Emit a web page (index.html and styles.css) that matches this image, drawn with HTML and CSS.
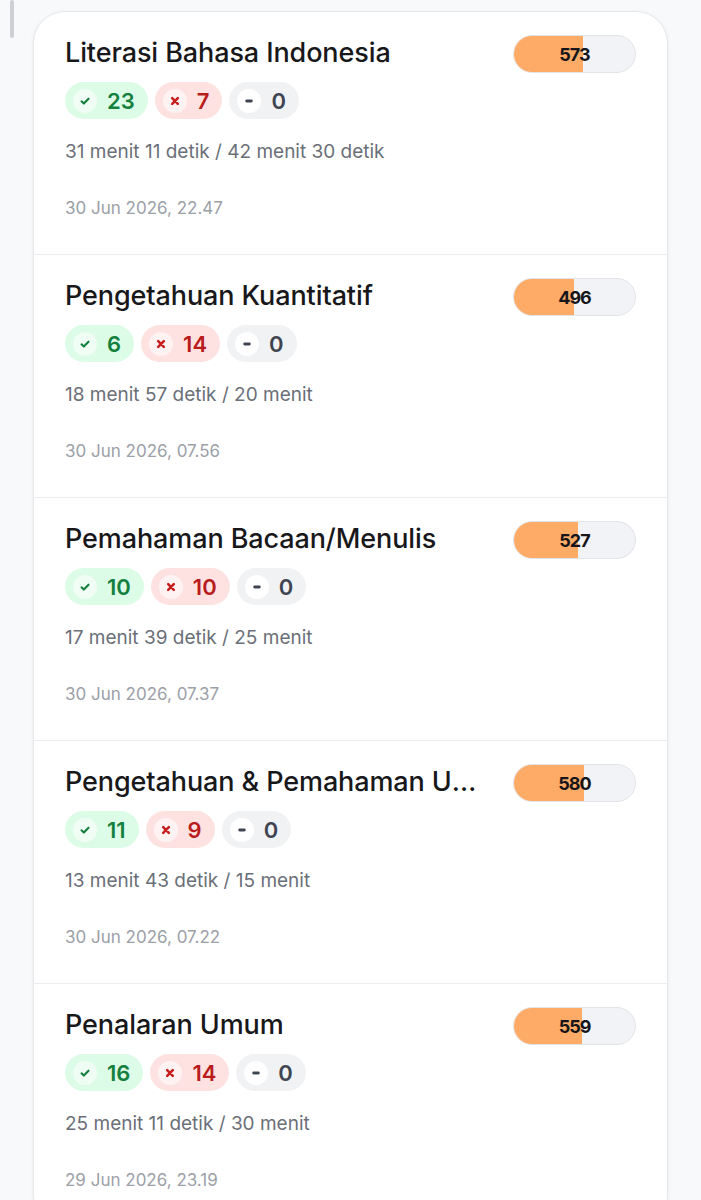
FILE: index.html
```html
<!DOCTYPE html>
<html lang="id">
<head>
    <meta charset="UTF-8">
    <meta name="viewport" content="width=device-width, initial-scale=1.0">
    <title>Riwayat Tryout</title>
    <link rel="stylesheet" href="styles.css">
</head>
<body>
    <div class="scroll-thumb"></div>

    <div class="card">
        <div class="row">
            <div class="info">
                <div class="title">Literasi Bahasa Indonesia</div>
                <div class="badges">
                    <span class="badge ok"><span class="dot"><svg viewBox="0 0 12 12"><path d="M3 6.3l2 1.9 4-4.2"/></svg></span>23</span>
                    <span class="badge bad"><span class="dot"><svg viewBox="0 0 12 12"><path d="M3.6 3.6l4.8 4.8M8.4 3.6l-4.8 4.8"/></svg></span>7</span>
                    <span class="badge none"><span class="dot"><svg viewBox="0 0 12 12"><path d="M4 6h4"/></svg></span>0</span>
                </div>
                <div class="time">31 menit 11 detik / 42 menit 30 detik</div>
                <div class="date">30 Jun 2026, 22.47</div>
            </div>
            <div class="score"><div class="fill" style="width: 57.3%"></div><span>573</span></div>
        </div>

        <div class="row">
            <div class="info">
                <div class="title">Pengetahuan Kuantitatif</div>
                <div class="badges">
                    <span class="badge ok"><span class="dot"><svg viewBox="0 0 12 12"><path d="M3 6.3l2 1.9 4-4.2"/></svg></span>6</span>
                    <span class="badge bad"><span class="dot"><svg viewBox="0 0 12 12"><path d="M3.6 3.6l4.8 4.8M8.4 3.6l-4.8 4.8"/></svg></span>14</span>
                    <span class="badge none"><span class="dot"><svg viewBox="0 0 12 12"><path d="M4 6h4"/></svg></span>0</span>
                </div>
                <div class="time">18 menit 57 detik / 20 menit</div>
                <div class="date">30 Jun 2026, 07.56</div>
            </div>
            <div class="score"><div class="fill" style="width: 49.6%"></div><span>496</span></div>
        </div>

        <div class="row">
            <div class="info">
                <div class="title">Pemahaman Bacaan/Menulis</div>
                <div class="badges">
                    <span class="badge ok"><span class="dot"><svg viewBox="0 0 12 12"><path d="M3 6.3l2 1.9 4-4.2"/></svg></span>10</span>
                    <span class="badge bad"><span class="dot"><svg viewBox="0 0 12 12"><path d="M3.6 3.6l4.8 4.8M8.4 3.6l-4.8 4.8"/></svg></span>10</span>
                    <span class="badge none"><span class="dot"><svg viewBox="0 0 12 12"><path d="M4 6h4"/></svg></span>0</span>
                </div>
                <div class="time">17 menit 39 detik / 25 menit</div>
                <div class="date">30 Jun 2026, 07.37</div>
            </div>
            <div class="score"><div class="fill" style="width: 52.7%"></div><span>527</span></div>
        </div>

        <div class="row">
            <div class="info">
                <div class="title">Pengetahuan &amp; Pemahaman Umum</div>
                <div class="badges">
                    <span class="badge ok"><span class="dot"><svg viewBox="0 0 12 12"><path d="M3 6.3l2 1.9 4-4.2"/></svg></span>11</span>
                    <span class="badge bad"><span class="dot"><svg viewBox="0 0 12 12"><path d="M3.6 3.6l4.8 4.8M8.4 3.6l-4.8 4.8"/></svg></span>9</span>
                    <span class="badge none"><span class="dot"><svg viewBox="0 0 12 12"><path d="M4 6h4"/></svg></span>0</span>
                </div>
                <div class="time">13 menit 43 detik / 15 menit</div>
                <div class="date">30 Jun 2026, 07.22</div>
            </div>
            <div class="score"><div class="fill" style="width: 58%"></div><span>580</span></div>
        </div>

        <div class="row">
            <div class="info">
                <div class="title">Penalaran Umum</div>
                <div class="badges">
                    <span class="badge ok"><span class="dot"><svg viewBox="0 0 12 12"><path d="M3 6.3l2 1.9 4-4.2"/></svg></span>16</span>
                    <span class="badge bad"><span class="dot"><svg viewBox="0 0 12 12"><path d="M3.6 3.6l4.8 4.8M8.4 3.6l-4.8 4.8"/></svg></span>14</span>
                    <span class="badge none"><span class="dot"><svg viewBox="0 0 12 12"><path d="M4 6h4"/></svg></span>0</span>
                </div>
                <div class="time">25 menit 11 detik / 30 menit</div>
                <div class="date">29 Jun 2026, 23.19</div>
            </div>
            <div class="score"><div class="fill" style="width: 55.9%"></div><span>559</span></div>
        </div>
    </div>
</body>
</html>
```

FILE: styles.css
```css
body {
    margin: 0;
    background: #f8f9fb;
    font-family: "Inter", "Noto Sans", sans-serif;
    color: #18181b;
}
.scroll-thumb {
    position: fixed;
    left: 10px;
    top: 0;
    width: 4px;
    height: 38px;
    border-radius: 2px;
    background: #cfd0d4;
}
.card {
    margin: 11px 0 0 33px;
    width: 635px;
    box-sizing: border-box;
    background: #fff;
    border: 1px solid #e6e7ea;
    border-radius: 32px;
    box-shadow: 0 1px 4px rgba(0, 0, 0, 0.06);
    overflow: hidden;
}
.row {
    display: flex;
    align-items: flex-start;
    gap: 34px;
    padding: 23px 31px 34px 31px;
    border-bottom: 1px solid #ececef;
}
.info {
    flex: 1;
    min-width: 0;
}
.title {
    font-size: 27px;
    line-height: 36px;
    font-weight: 500;
    letter-spacing: -0.1px;
    white-space: nowrap;
    overflow: hidden;
    text-overflow: ellipsis;
}
.badges {
    display: flex;
    gap: 7px;
    margin-top: 11px;
}
.badge {
    display: inline-flex;
    align-items: center;
    gap: 10px;
    height: 37px;
    padding: 0 13px 0 8px;
    border-radius: 19px;
    font-size: 22px;
    font-weight: 600;
}
.dot {
    width: 24px;
    height: 24px;
    border-radius: 50%;
    display: flex;
    align-items: center;
    justify-content: center;
}
.dot svg {
    width: 14px;
    height: 14px;
    fill: none;
    stroke-width: 1.8;
    stroke-linecap: round;
    stroke-linejoin: round;
}
.ok { background: #dcfce7; color: #15803d; }
.ok .dot { background: #f0fdf4; }
.ok svg { stroke: #15803d; }
.bad { background: #fee2e2; color: #b91c1c; }
.bad .dot { background: #fef2f2; }
.bad svg { stroke: #c81e1e; stroke-width: 2.2; }
.none { background: #f1f2f4; color: #3f4451; }
.none .dot { background: #fff; }
.none svg { stroke: #3f4451; stroke-width: 2.4; }
.time {
    margin-top: 20px;
    font-size: 19px;
    line-height: 26px;
    color: #6b6f78;
}
.date {
    margin-top: 31px;
    font-size: 17px;
    line-height: 24px;
    color: #9ca0a8;
}
.score {
    position: relative;
    flex: none;
    width: 123px;
    height: 38px;
    box-sizing: border-box;
    border: 1px solid #e3e4e8;
    border-radius: 19px;
    background: #f2f3f6;
    overflow: hidden;
    display: flex;
    align-items: center;
    justify-content: center;
}
.fill {
    position: absolute;
    left: 0;
    top: 0;
    bottom: 0;
    background: #fdab66;
}
.score span {
    position: relative;
    font-size: 18px;
    font-weight: 700;
    color: #16161a;
    letter-spacing: -1px;
}
```
